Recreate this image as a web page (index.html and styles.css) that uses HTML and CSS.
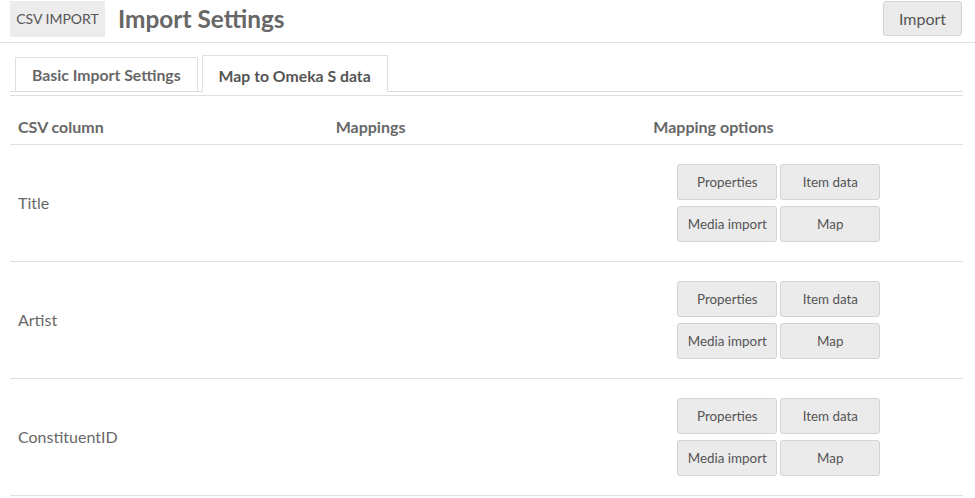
FILE: index.html
```html
<!DOCTYPE html>
<html>
<head>
<meta charset="utf-8">
<link rel="stylesheet" href="styles.css">
</head>
<body>
<header class="page-header">
  <div class="module-label">CSV IMPORT</div>
  <h1 class="page-title">Import Settings</h1>
  <button class="btn import-btn">Import</button>
</header>
<main class="content">
  <ul class="tabs">
    <li class="tab">Basic Import Settings</li>
    <li class="tab active">Map to Omeka S data</li>
  </ul>
  <section class="mapping">
    <table class="mapping-table">
      <thead>
        <tr>
          <th>CSV column</th>
          <th>Mappings</th>
          <th>Mapping options</th>
        </tr>
      </thead>
      <tbody>
        <tr>
          <td class="col-name">Title</td>
          <td></td>
          <td><div class="opts"><button class="btn opt">Properties</button><button class="btn opt">Item data</button><button class="btn opt">Media import</button><button class="btn opt">Map</button></div></td>
        </tr>
        <tr>
          <td class="col-name">Artist</td>
          <td></td>
          <td><div class="opts"><button class="btn opt">Properties</button><button class="btn opt">Item data</button><button class="btn opt">Media import</button><button class="btn opt">Map</button></div></td>
        </tr>
        <tr>
          <td class="col-name">ConstituentID</td>
          <td></td>
          <td><div class="opts"><button class="btn opt">Properties</button><button class="btn opt">Item data</button><button class="btn opt">Media import</button><button class="btn opt">Map</button></div></td>
        </tr>
      </tbody>
    </table>
  </section>
</main>
</body>
</html>
```

FILE: styles.css
```css
* { box-sizing: border-box; }
body {
  margin: 0;
  font-family: Lato, "Open Sans", sans-serif;
  color: #676767;
  background: #fff;
}
.page-header {
  display: flex;
  align-items: flex-start;
  height: 43px;
  padding: 1px 13px 0 10px;
  border-bottom: 1px solid #dfdfdf;
}
.module-label {
  width: 95px;
  height: 36px;
  line-height: 36px;
  background: #ececec;
  font-size: 14px;
  text-align: center;
  color: #555;
}
.page-title {
  margin: 0 0 0 13px;
  font-size: 24.4px;
  font-weight: 700;
  line-height: 36px;
  color: #676767;
}
.btn {
  font-family: Lato, "Open Sans", sans-serif;
  background: #ebebeb;
  border: 1px solid #d3d3d3;
  border-radius: 3px;
  color: #555;
  padding: 0;
  cursor: pointer;
}
.import-btn {
  margin-left: auto;
  width: 79px;
  height: 35px;
  font-size: 16px;
}
.content {
  padding: 0 12px 0 10px;
}
.tabs {
  list-style: none;
  margin: 12px 0 0;
  padding: 0 0 0 4px;
  display: flex;
  align-items: flex-end;
  gap: 4px;
  border-bottom: 1px solid #dfdfdf;
  height: 37px;
}
.tab {
  border: 1px solid #dfdfdf;
  border-bottom: none;
  height: 34px;
  line-height: 34px;
  padding: 0 16px;
  font-size: 15.8px;
  font-weight: 700;
  color: #676767;
  margin-left: 1px;
}
.tab.active {
  height: 37px;
  line-height: 40px;
  margin-bottom: -1px;
  background: #fff;
  color: #555;
  margin-left: 0;
  padding: 0 16px 0 16px;
}
.mapping {
  margin-top: 3px;
  border-top: 1px solid #dfdfdf;
}
.mapping-table {
  width: 100%;
  border-collapse: collapse;
  table-layout: fixed;
}
.mapping-table th {
  text-align: left;
  font-size: 16px;
  font-weight: 700;
  height: 48px;
  padding: 14px 8px 0;
  border-bottom: 1px solid #dfdfdf;
  color: #676767;
}
.mapping-table td {
  height: 117px;
  padding: 0 8px;
  vertical-align: middle;
  border-bottom: 1px solid #dfdfdf;
  font-size: 16px;
}
.opts {
  display: grid;
  grid-template-columns: 100px 100px;
  column-gap: 3px;
  row-gap: 6px;
  margin-left: 24px;
  padding-top: 1px;
}
.opt {
  height: 36px;
  font-size: 13.4px;
}
```
